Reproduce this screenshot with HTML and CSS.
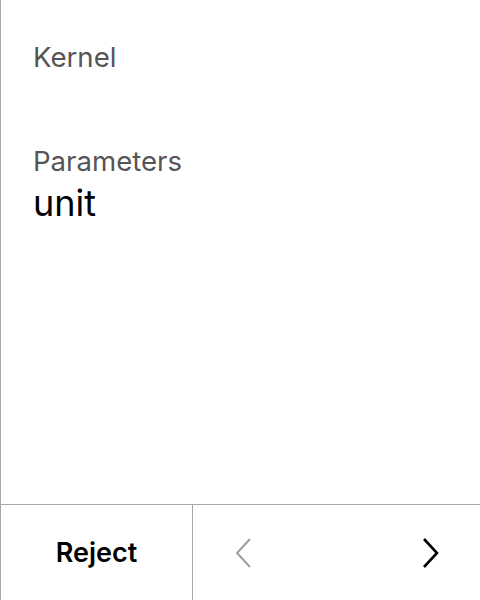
FILE: index.html
```html
<!DOCTYPE html>
<html>
<head>
<meta charset="utf-8">
<link rel="stylesheet" href="styles.css">
</head>
<body>
<div class="screen">
  <main class="content">
    <div class="label kernel">Kernel</div>
    <div class="label params">Parameters</div>
    <div class="value">unit</div>
  </main>
  <footer class="footer">
    <button class="reject">Reject</button>
    <div class="nav">
      <span class="chev prev"><svg width="20" height="32" viewBox="0 0 20 32"><path d="M16 2 L3 16 L16 30" fill="none" stroke="#9e9e9e" stroke-width="2"/></svg></span>
      <span class="chev next"><svg width="20" height="32" viewBox="0 0 20 32"><path d="M4 2 L17 16 L4 30" fill="none" stroke="#000" stroke-width="2.6"/></svg></span>
    </div>
  </footer>
</div>
</body>
</html>
```
FILE: styles.css
```css
* { box-sizing: border-box; }
html, body { margin: 0; padding: 0; background: #fff; }
body { font-family: Inter, "Noto Sans", sans-serif; }
.screen {
  width: 480px; height: 600px;
  border-left: 1px solid #a8a8a8;
  display: flex; flex-direction: column;
}
.content { flex: 1; padding: 40px 0 0 32px; }
.label { font-size: 27.6px; color: #555; line-height: 34px; }
.params { margin-top: 70px; }
.value { font-size: 36px; color: #000; line-height: 40px; margin-top: 5px; }
.footer {
  height: 96px; border-top: 1px solid #a8a8a8;
  display: flex;
}
.reject {
  width: 192px; border: 0; border-right: 1px solid #a8a8a8; background: #fff;
  font-family: Inter, sans-serif; font-size: 27px; font-weight: 600; color: #000;
  padding: 0;
}
.nav { flex: 1; display: flex; align-items: center; justify-content: space-between; padding: 0 40px 0 41px; }
.chev { display: flex; }
```
